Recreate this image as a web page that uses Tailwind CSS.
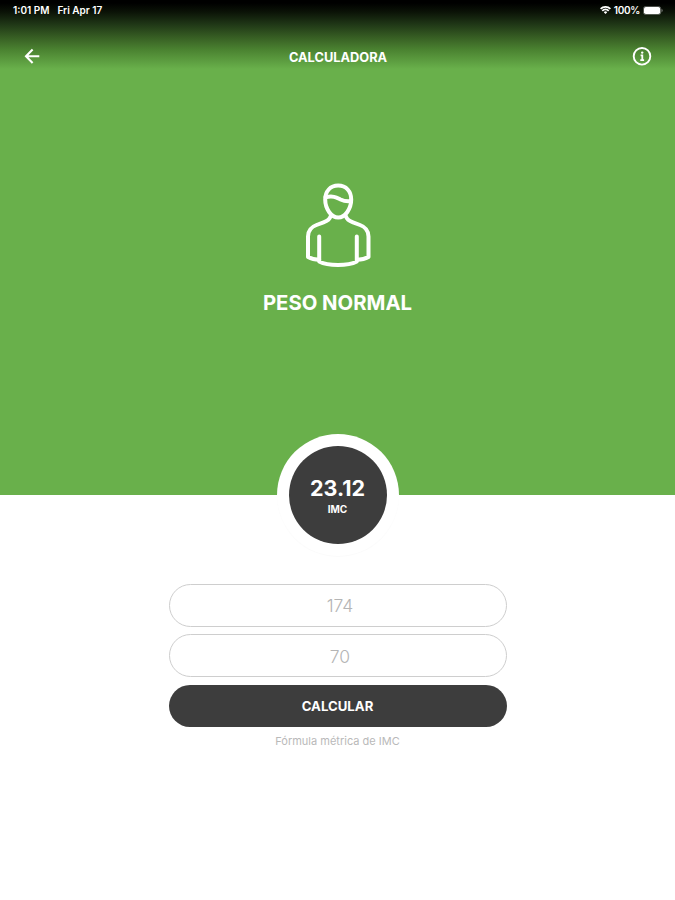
<!DOCTYPE html>
<html lang="es">
<head>
  <meta charset="UTF-8">
  <meta name="viewport" content="width=device-width, initial-scale=1.0">
  <title>Calculadora IMC</title>
  <script src="https://cdn.jsdelivr.net/npm/@tailwindcss/browser@4"></script>
</head>
<body class="bg-white font-['Inter','Liberation_Sans',sans-serif]">
  <div class="h-[900px] flex flex-col overflow-hidden">
    <!-- Result panel -->
    <section class="h-[495px] shrink-0 bg-[#69b04b] text-white">
      <div class="h-[72px] bg-[linear-gradient(to_bottom,#000_3px,#0b1307_12px,#1f3616_24px,#386024_38px,#4b8331_50px,#69b04b_69px)]">
        <!-- Status bar -->
        <div class="h-5 pl-[13px] pr-3 flex items-center justify-between text-[10px] font-semibold leading-5">
          <div class="flex gap-[8px]">
            <span>1:01 PM</span>
            <span>Fri Apr 17</span>
          </div>
          <div class="flex items-center gap-[3px]">
            <svg class="w-[11px] h-2" viewBox="0 0 11 8" fill="none" stroke="currentColor" stroke-width="1.8">
              <path d="M.6 2.9a7 7 0 0 1 9.8 0M2.3 4.8a4.5 4.5 0 0 1 6.4 0"/>
              <path d="M5.5 7.9 3.8 6.2a2.4 2.4 0 0 1 3.4 0z" fill="currentColor" stroke="none"/>
            </svg>
            <span class="tracking-[-0.3px]">100%</span>
            <svg class="w-[20px] h-[9px]" viewBox="0 0 20 9" fill="none">
              <rect x=".4" y=".4" width="17.4" height="8.2" rx="2.4" stroke="#fff" stroke-opacity=".45" stroke-width=".7"/>
              <rect x="1" y="1" width="16.2" height="7" rx="1.8" fill="#fff"/>
              <path d="M18.7 3v3c1.2-.5 1.2-2.5 0-3z" fill="#fff" fill-opacity=".55"/>
            </svg>
          </div>
        </div>
        <!-- Nav bar -->
        <header class="h-[52px] pt-[27px] pl-6 pr-[23px] grid grid-cols-3 items-start">
          <button class="w-4 h-5 flex items-center" aria-label="Volver">
            <svg class="w-4 h-5" viewBox="0 0 16 20" fill="none" stroke="currentColor" stroke-width="2.1">
              <path d="M15.3 9.2H2.4M8.6 2.5 2 9.2l6.6 6.7"/>
            </svg>
          </button>
          <h1 class="text-center text-[12.8px] font-bold leading-[22px]">CALCULADORA</h1>
          <button class="justify-self-end w-5 h-5" aria-label="Información">
            <svg class="w-5 h-5" viewBox="0 0 20 20" fill="none" stroke="currentColor">
              <circle cx="10" cy="9.3" r="8.3" stroke-width="1.9"/>
              <path d="M8.6 8.3h1.7v4.6M8.3 13.1h3.8" stroke-width="1.8"/>
              <circle cx="10.2" cy="5.6" r="1.2" fill="currentColor" stroke="none"/>
            </svg>
          </button>
        </header>
      </div>
      <div class="pt-[98px] flex flex-col items-center">
        <svg class="w-[100px] h-[110px] translate-x-[2px]" viewBox="0 0 100 110" fill="none" stroke="currentColor" stroke-width="4" stroke-linecap="round" stroke-linejoin="round">
          <path d="M48.2 15.6c-8 0-13 5.8-13 14 0 9 6 18 13 18s13-9 13-18c0-8.2-5-14-13-14z"/>
          <path d="M35.5 27.2c8-1.7 11 .3 15 2.3 3 1.4 6.500 2 10 1.600"/>
          <path d="M40.500 46.500c-1 3.500-3.500 4.600-7 5.900l-7 2.600c-5.500 2-8.500 5.500-8.500 11.500v20.500c3 1.700 7 2.700 11.200 2.700"/>
          <path d="M56 46.500c1 3.500 3.500 4.600 7 5.900l7 2.600c5.500 2 8.500 5.500 8.500 11.500v20.500c-3 1.700-7 2.700-11.200 2.700"/>
          <path d="M29.200 66.500v24.900c9 4.700 28.600 4.700 37.600 0v-24.900"/>
        </svg>
        <h2 class="mt-[7px] text-[20.3px] font-bold leading-8">PESO NORMAL</h2>
      </div>
    </section>

    <!-- IMC badge -->
    <div class="relative -mt-[61px] mx-auto w-[122px] h-[122px] shrink-0 rounded-full bg-white flex items-center justify-center shadow-[0_1px_1px_rgba(0,0,0,0.02)]">
      <div class="w-[98px] h-[98px] rounded-full bg-[#3d3d3d] text-white flex flex-col items-center pt-[28px]">
        <span class="text-[21.5px] font-bold leading-7">23.12</span>
        <span class="text-[10px] font-bold leading-[14px]">IMC</span>
      </div>
    </div>

    <!-- Form -->
    <form class="mt-7 mx-auto w-[338px] flex flex-col gap-2" onsubmit="event.preventDefault()">
      <input type="text" placeholder="174" aria-label="Altura" class="h-[43px] pl-[5px] rounded-full border border-[#cecece] text-center text-[17.5px] font-light placeholder:text-[#b5b5b5]">
      <input type="text" placeholder="70" aria-label="Peso" class="-mt-px h-[43px] pl-[5px] pt-px rounded-full border border-[#cecece] text-center text-[17.5px] font-light placeholder:text-[#b5b5b5]">
      <button type="submit" class="h-[42px] pt-0.5 rounded-full bg-[#3d3d3d] text-white text-[13.2px] font-bold">CALCULAR</button>
      <p class="-mt-0.5 text-center text-[11px] leading-4 text-[#b9b9b9]">Fórmula métrica de IMC</p>
    </form>
  </div>
</body>
</html>
